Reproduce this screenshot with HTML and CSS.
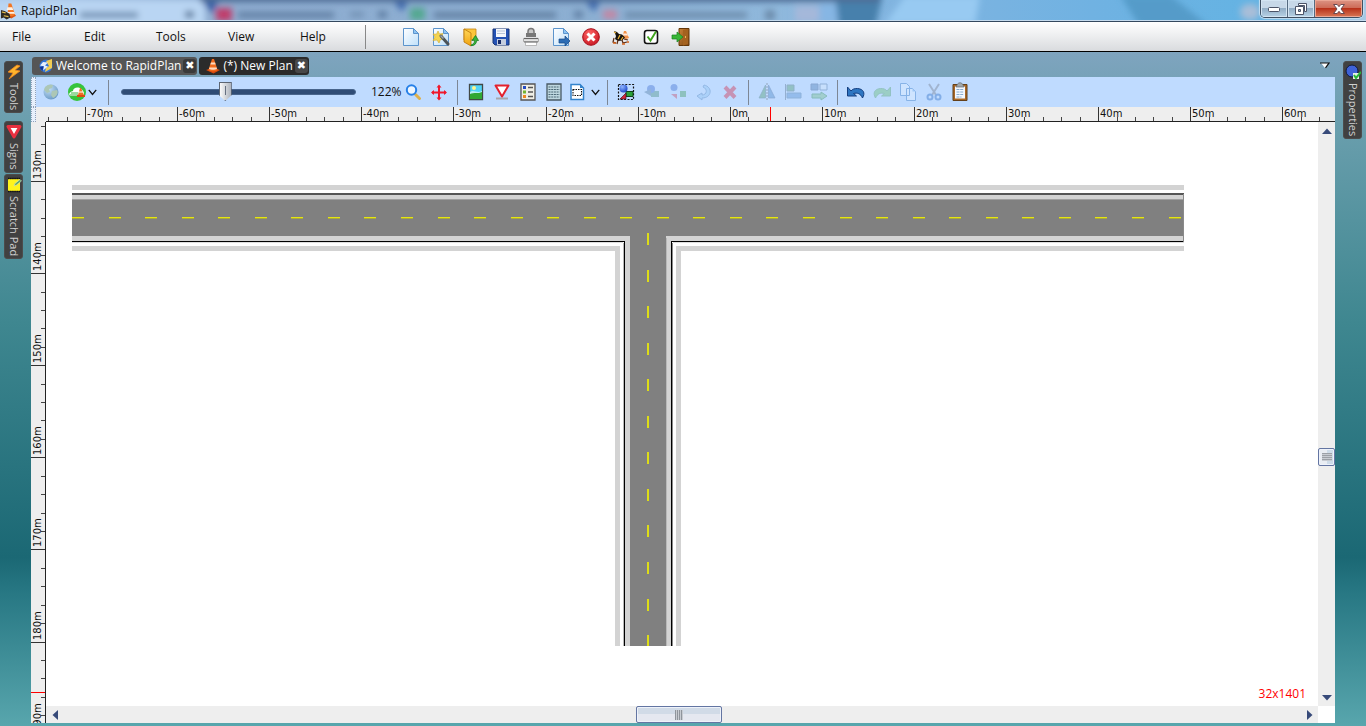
FILE: index.html
```html
<!DOCTYPE html>
<html lang="en">
<head>
<meta charset="utf-8">
<title>RapidPlan</title>
<link rel="stylesheet" href="styles.css">
</head>
<body>
<svg class="defs" aria-hidden="true">
  <defs>
    <linearGradient id="sheet" x1="0" y1="0" x2="1" y2="1"><stop offset="0" stop-color="#fff"/><stop offset="1" stop-color="#bfe0fa"/></linearGradient>
    <linearGradient id="gold" x1="0" y1="0" x2="0" y2="1"><stop offset="0" stop-color="#ffd75a"/><stop offset="1" stop-color="#f0a210"/></linearGradient>
    <linearGradient id="wood" x1="0" y1="0" x2="1" y2="1"><stop offset="0" stop-color="#c98438"/><stop offset="1" stop-color="#7c4310"/></linearGradient>
    <radialGradient id="red" cx=".4" cy=".3" r=".8"><stop offset="0" stop-color="#f66"/><stop offset="1" stop-color="#c4101c"/></radialGradient>
    <radialGradient id="ball" cx=".35" cy=".3" r=".8"><stop offset="0" stop-color="#8fb4ff"/><stop offset="1" stop-color="#123fc4"/></radialGradient>
    <radialGradient id="globe" cx=".35" cy=".3" r=".8"><stop offset="0" stop-color="#c4e0f4"/><stop offset="1" stop-color="#3f78a8"/></radialGradient>
    <filter id="soft" x="-20%" y="-80%" width="140%" height="260%"><feGaussianBlur stdDeviation="3"/></filter>
    <symbol id="cone" viewBox="0 0 16 16"><path d="M1 12l7-2.500 7 2.500-6.500 3.500z" fill="#d8480c"/><path d="M7 1h2l3.600 11c-2 1.900-7 1.900-9.200 0z" fill="#f26a1c"/><path d="M6 4.500h4l.7 2H5.300zM4.400 9.500h7.200l.4 1.200c-2 1.300-6 1.300-8 0z" fill="#ffd9bd"/></symbol>
    <symbol id="page" viewBox="0 0 20 20"><path d="M2.500 1.500h10l5 5v12h-15z" fill="url(#sheet)" stroke="#5c94cc"/><path d="M12.500 1.500v5h5z" fill="#8cc4f4" stroke="#5c94cc"/></symbol>
    <symbol id="caret" viewBox="0 0 8 6"><path d="M.7.700L4 4.700 7.300.7" fill="none" stroke="#111" stroke-width="1.200"/></symbol>
  </defs>
</svg>

<header class="titlebar">
  <svg class="glass" aria-hidden="true">
    <g filter="url(#soft)">
      <rect x="-10" y="0" width="215" height="26" fill="#b9d5f3"/>
      <path d="M196-6h26l-10 20z" fill="#3560a8"/><path d="M388-6h24l-10 18z" fill="#3c68ac"/><path d="M580-6h24l-10 18z" fill="#3c68ac"/>
      <rect x="80" y="12" width="58" height="6" fill="#7190b2"/><rect x="185" y="11" width="9" height="7" fill="#5d7c9f"/>
      <rect x="216" y="8" width="16" height="13" fill="#c03c6c"/>
      <rect x="238" y="12" width="96" height="6" fill="#6280a4"/><rect x="350" y="12" width="14" height="5" fill="#7190b2"/><rect x="378" y="11" width="9" height="7" fill="#6080a4"/>
      <rect x="410" y="8" width="15" height="12" fill="#52a890"/>
      <rect x="434" y="12" width="122" height="6" fill="#6280a2"/><rect x="574" y="11" width="9" height="7" fill="#6080a4"/>
      <rect x="603" y="10" width="14" height="9" fill="#c287a4"/><rect x="625" y="12" width="122" height="6" fill="#6d8cac"/>
      <rect x="765" y="10" width="10" height="10" fill="#6d8cac"/><rect x="795" y="6" width="24" height="16" fill="#a5b8da"/><rect x="820" y="4" width="22" height="18" fill="#86b6e4"/>
      <path d="M835-6h48l-8 34h-36z" fill="#4780ac"/><path d="M885 24l20-28h75l-5 28z" fill="#98caf2"/>
      <path d="M1120-5h50l40 32h-70z" fill="#559bc9"/>
      <ellipse cx="1250" cy="12" rx="10" ry="8" fill="#a9bed8"/>
      <rect x="200" y="-6" width="680" height="8" fill="#4d6c94"/>
    </g>
  </svg>
  <svg class="app-icon" viewBox="0 0 18 18" aria-hidden="true"><path d="M6 14l6-5 5 5-5 3z" fill="#dc5714"/><path d="M9 1h3l4 12c-2 2-6 2-8 0z" fill="#f27624"/><path d="M8 5h5l1 3H7zM7 10h8l1 2H7z" fill="#fff0e2"/><path d="M1 8l4 1 5 3 1 4-4 2-3-2-3 1z" fill="#302c24"/><path d="M2 10l4 1M4 14l5 1" stroke="#e4bc4c" stroke-width="1.200"/></svg>
  <h1 class="app-title">RapidPlan</h1>
  <div class="window-buttons">
    <button class="win" aria-label="Minimize"><svg width="14" height="8" viewBox="0 0 14 8"><rect x="1.500" y="2.500" width="11" height="4" rx="1" fill="#fff" stroke="#4c5468"/></svg></button>
    <button class="win" aria-label="Restore"><svg width="12" height="12" viewBox="0 0 12 12"><path d="M3.500.500h8v8h-2v-6h-6z" fill="#fff" stroke="#4c5468"/><path d="M.5 3.500h8v8h-8zM3.500 6.500v2h2v-2z" fill="#fff" fill-rule="evenodd" stroke="#4c5468"/></svg></button>
    <button class="win win-close" aria-label="Close"><svg width="12" height="10" viewBox="0 0 12 10"><path d="M.6.500h3.600L6 2.700 7.800.500h3.600L8 5l3.400 4.500H7.800L6 7.300 4.200 9.500H.6L4 5z" fill="#fff" stroke="#5c4048" stroke-width=".9"/></svg></button>
  </div>
</header>

<div class="menubar">
  <nav class="menus" aria-label="Main menu">
    <button class="menu">File</button><button class="menu">Edit</button><button class="menu">Tools</button><button class="menu">View</button><button class="menu">Help</button>
  </nav>
  <div class="main-tools">
    <button aria-label="New"><svg viewBox="0 0 20 20"><use href="#page"/></svg></button>
    <button aria-label="New from wizard"><svg viewBox="0 0 20 20"><use href="#page"/><path d="M7 4l1.500 3L12 6.500 10.500 9.500 13 12l-3.500.5L8 16l-2-3-4 .5L4 10 2 7l3.500.2z" fill="#f4d450" stroke="#d2aa2c" stroke-width=".6"/><path d="M10 9l7 8" stroke="#4c5358" stroke-width="3" stroke-linecap="round"/><path d="M9.500 8.500l3 3" stroke="#9ca4a8" stroke-width="1.500"/></svg></button>
    <button aria-label="Open"><svg viewBox="0 0 20 20"><path d="M3 2h12v11H3z" fill="#fcc63c" stroke="#c58410" stroke-width=".8"/><path d="M3 2l7 4v13l-7-4z" fill="url(#gold)" stroke="#b87408" stroke-width=".8"/><path d="M10 18c3-1 4-3 3-5l-2 .5 3.500-5 3 5-2 .2c0 3-2 5-5.500 5z" fill="#38b43c" stroke="#187c24" stroke-width=".8"/></svg></button>
    <button aria-label="Save"><svg viewBox="0 0 20 20"><path d="M2 2h16v16H4l-2-2z" fill="#2452b4" stroke="#163476"/><path d="M5 2h10v8H5z" fill="#f4f7fc"/><path d="M6 4h8M6 6.500h8" stroke="#b8c4d8"/><path d="M6 12h9v6H6z" fill="#c5cedf"/><path d="M7 13h3v4H7z" fill="#182c68"/></svg></button>
    <button aria-label="Print"><svg viewBox="0 0 20 20"><path d="M7 7V4.500c0-4 6-4 6 0V7" fill="#c8c8c8" stroke="#777" stroke-width="1.500"/><path d="M5 6h10v4H5z" fill="#777"/><path d="M2.500 11.500h15v3h-15z" fill="#e4e4e4" stroke="#999" stroke-width=".8"/><path d="M3 11.500h14" stroke="#666" stroke-width="1.200"/><path d="M4.500 15h11v3.500h-11z" fill="#fff" stroke="#aaa" stroke-width=".8"/><path d="M3 15h14" stroke="#777"/></svg></button>
    <button aria-label="Export"><svg viewBox="0 0 20 20"><use href="#page"/><path d="M8 12h6V9l5 5-5 5v-3H8z" fill="#2c6cb4" stroke="#174884" stroke-width=".7"/></svg></button>
    <button aria-label="Close plan"><svg viewBox="0 0 20 20"><circle cx="10" cy="10" r="8.300" fill="url(#red)" stroke="#a80c18"/><path d="M6.500 6.500l7 7m0-7l-7 7" stroke="#fff" stroke-width="3"/></svg></button>
    <button aria-label="Plan jobs"><svg viewBox="0 0 20 20"><path d="M11 11l2-7h2l3 7-3 1z" fill="#f29148"/><path d="M12.300 6.500h4l.6 2h-5z" fill="#ffe9da"/><path d="M3 4l3 1 2 2 3 .5 3 3-3 3-4 .5-3-2 1-3z" fill="#17130e"/><path d="M3 5l2 1M9 8l-2 4M12 10l-2 3" stroke="#efb434" stroke-width="1.200"/><path d="M3 11l-1 4 3 1M7 13l-1 4M11 13l1 3 4-1M13 12l4 1" fill="none" stroke="#5c2c14" stroke-width="1.200"/><path d="M2 16h3M11 17h3M16 15h2" stroke="#d8641c" stroke-width="1.400"/></svg></button>
    <button aria-label="Options"><svg viewBox="0 0 20 20"><rect x="3.500" y="3.500" width="13" height="13" rx="2.500" fill="#fff" stroke="#111" stroke-width="1.600"/><path d="M6.500 9.500l3 4 5.500-9" fill="none" stroke="#3fa41c" stroke-width="1.900"/></svg></button>
    <button aria-label="Exit"><svg viewBox="0 0 20 20"><path d="M8 1.500h10v17H8z" fill="url(#wood)" stroke="#653809"/><path d="M12 3l5-1v15l-5 1.500z" fill="#a4621f"/><path d="M14 10h1" stroke="#ffd56a" stroke-width="1.500"/><path d="M1 8h5V5l6 5-6 5v-3H1z" fill="#38b536" stroke="#17811f" stroke-width=".7"/></svg></button>
  </div>
</div>

<div class="workspace">
  <aside class="dock dock-left">
    <button class="dock-tab"><svg viewBox="0 0 16 16"><path d="M11 1L2 8l5 1-4 6 11-8-5-1 5-4z" fill="#ffb52c" stroke="#ef8420" stroke-width=".8"/></svg><span>Tools</span></button>
    <button class="dock-tab dock-signs"><svg viewBox="0 0 16 16"><path d="M2 2.500h12L8 13z" fill="#fff" stroke="#e83040" stroke-width="3" stroke-linejoin="round"/></svg><span>Signs</span></button>
    <button class="dock-tab dock-pad"><svg viewBox="0 0 16 16"><path d="M2 2h12v12H2z" fill="#fff41c"/><path d="M2 1.500h12M2 14.500h12" stroke="#111" stroke-width="1.500" stroke-dasharray="1.500 .6"/><path d="M8 9l1-2.500 5-4 1.500 1.500-5 4z" fill="#60ad65" stroke="#d7ddd7" stroke-width=".6"/></svg><span>Scratch Pad</span></button>
  </aside>

  <main class="documents">
    <div class="tabs">
      <div class="tab"><svg class="tab-icon" viewBox="0 0 16 16"><circle cx="8" cy="8" r="6.500" fill="#3474d4"/><path d="M8 3l6-2v9l-7 4 1-4 3-2z" fill="#f1cd54"/><path d="M5 4l5 .5-3 3 3 1-5 4 1-4-4-1z" fill="#e5eefb"/><path d="M1.500 9.500l4-1.500-1 5z" fill="#0c329c"/></svg><a href="#welcome">Welcome to RapidPlan</a><button aria-label="Close Welcome tab">✖</button></div>
      <div class="tab tab-active"><svg class="tab-icon" viewBox="0 0 16 16"><use href="#cone"/></svg><a href="#plan">(*) New Plan</a><button aria-label="Close New Plan tab">✖</button></div>
      <button class="tab-list" aria-label="Open documents"><svg width="10" height="7" viewBox="0 0 10 7"><path d="M1 1h8L5 6z" fill="#fff"/><path d="M0 1h9L5.500 5.800" fill="none" stroke="#111" stroke-width="1.200"/></svg></button>
    </div>

    <div class="toolbar">
      <i class="grip"></i>
      <button class="tool tool-globe" aria-label="Map" disabled><svg viewBox="0 0 20 20"><circle cx="10" cy="10" r="7.500" fill="url(#globe)"/><path d="M4 5c3-3 6-3 8-2l-1 3-3 1 1 3-3 1-3-3zM11 9l5-1c2 3-1 7-4 8l-2-3z" fill="#a4bf98"/></svg></button>
      <button class="tool tool-menu tool-online" aria-label="Online map"><svg viewBox="0 0 20 20"><circle cx="10" cy="10" r="9" fill="#37c43c"/><path d="M2 12c1-2 3-3 4-3 0-3 5-5 8-2 2 1 3 3 3 5v2H3z" fill="#fff"/><path d="M4 11h7M3 13h8" stroke="#37b43c"/><path d="M13 6h1l3 7h-6z" fill="#ee7024"/><path d="M10 13h8v2h-8z" fill="#dc4b10"/><path d="M12 10h4" stroke="#fff"/></svg><svg class="caret" viewBox="0 0 8 6"><use href="#caret"/></svg></button>
      <i class="sep"></i>
      <input class="zoom" type="range" min="0" max="100" value="44" aria-label="Zoom">
      <output class="zoom-value">122%</output>
      <button class="tool" aria-label="Zoom window"><svg viewBox="0 0 20 20"><path d="M12.500 12.500l4 4" stroke="#deb04c" stroke-width="3" stroke-linecap="round"/><circle cx="8.500" cy="8" r="4.700" fill="#eef6ff" stroke="#2680e8" stroke-width="2"/></svg></button>
      <button class="tool" aria-label="Pan"><svg viewBox="0 0 20 20"><path d="M10 4v13M3 10.500h14" stroke="#f0182c" stroke-width="2"/><path d="M7.500 5.500L10 2.500l2.500 3zM7.500 15.500h5L10 18.500zM5 8v5l-3-2.500zM15 8v5l3-2.500z" fill="#f0182c"/></svg></button>
      <i class="sep"></i>
      <button class="tool" aria-label="Background image"><svg viewBox="0 0 20 20"><path d="M3.500 2.500h13v15h-13z" fill="#52d4f8" stroke="#414846" stroke-width="1.300"/><path d="M4 10c4-3 7 2 12-1v3H4z" fill="#b8f0f7"/><path d="M4 12c4-2 8 0 12-2v7H4z" fill="#30a834"/><circle cx="8" cy="6" r="2" fill="#fff58c"/></svg></button>
      <button class="tool" aria-label="Signs"><svg viewBox="0 0 20 20"><path d="M4 15.500h12v2H4z" fill="#a7a7ac"/><path d="M3.500 3.500h13l-6.500 11z" fill="#fff" stroke="#e3222e" stroke-width="2" stroke-linejoin="round"/></svg></button>
      <button class="tool" aria-label="Legend"><svg viewBox="0 0 20 20"><path d="M3 2h14v16H3z" fill="#f0efe6" stroke="#555" stroke-width="1.300"/><path d="M5 4h3v3H5z" fill="#244cc4"/><path d="M5 8.500h3v3H5z" fill="#74b432"/><path d="M5 13h3v3H5z" fill="#ed8821"/><path d="M10 5.500h5M10 10h5M10 14.500h5" stroke="#555" stroke-width="1.500"/></svg></button>
      <button class="tool" aria-label="Manifest"><svg viewBox="0 0 20 20"><path d="M3 2h14v16H3z" fill="#bed7df" stroke="#485a65" stroke-width="1.300"/><path d="M4.500 5h11M4.500 7.500h11M4.500 10h11M4.500 12.500h11M4.500 15h11" stroke="#4c6977" stroke-width="1.200" stroke-dasharray="2 .7"/></svg></button>
      <button class="tool tool-menu tool-page" aria-label="Print region"><svg viewBox="0 0 20 20"><path d="M4 2.500h9l3.500 3.500v11.500H4z" fill="#fff" stroke="#3484cc" stroke-width="1.500"/><path d="M13 2v4h4z" fill="#3484cc"/><path d="M6 7.500h8.500v6H6z" fill="none" stroke="#111" stroke-width="1.100" stroke-dasharray="1.500 1"/></svg><svg class="caret" viewBox="0 0 8 6"><use href="#caret"/></svg></button>
      <i class="sep"></i>
      <button class="tool" aria-label="Select all"><svg viewBox="0 0 20 20"><path d="M2.500 2.500h15v15h-15z" fill="none" stroke="#111" stroke-width="1.200" stroke-dasharray="2 1.400"/><path d="M10 9.500h7v5h-7z" fill="#2ba238" stroke="#11441b"/><path d="M4 17l6-6v6z" fill="#d5263b" stroke="#431522" stroke-width=".7"/><circle cx="7.500" cy="6.500" r="4" fill="url(#ball)"/></svg></button>
      <button class="tool" aria-label="Group" disabled><svg viewBox="0 0 20 20"><path d="M9 9h8v6H9z" fill="#4b8f81"/><circle cx="9" cy="7" r="4" fill="#406fd0"/><path d="M2 10l7-3v7z" fill="#517ba1"/></svg></button>
      <button class="tool" aria-label="Ungroup" disabled><svg viewBox="0 0 20 20"><circle cx="6" cy="5.500" r="3.500" fill="#406fd0"/><path d="M12 9h6v6h-6z" fill="#479b61"/><path d="M3 12h6v5z" fill="#c54967"/></svg></button>
      <button class="tool" aria-label="Rotate" disabled><svg viewBox="0 0 20 20"><path d="M10 3c9 2 8 13-2 13v2l-5-4 5-3v2c5 0 6-6 1-8z" fill="#8fc4f1" stroke="#5284bc"/></svg></button>
      <button class="tool" aria-label="Delete" disabled><svg viewBox="0 0 20 20"><path d="M5 5l10 10.500m0-10.500l-10 10.500" stroke="#d22a47" stroke-width="4"/></svg></button>
      <i class="sep"></i>
      <button class="tool" aria-label="Mirror" disabled><svg viewBox="0 0 20 20"><path d="M8.500 3v13H2z" fill="#519b6e" stroke="#406f73" stroke-width=".7"/><path d="M11.500 3v13H18z" fill="#4b87c7" stroke="#385d91" stroke-width=".7"/><path d="M10 1v17" stroke="#555" stroke-dasharray="2 1"/></svg></button>
      <button class="tool" aria-label="Align" disabled><svg viewBox="0 0 20 20"><path d="M2.500 2v16" stroke="#56708c"/><path d="M4 3h7v6H4z" fill="#519b6e" stroke="#4c757b"/><path d="M4 11h14v5H4z" fill="#568fd1" stroke="#4979a5"/></svg></button>
      <button class="tool" aria-label="Distribute" disabled><svg viewBox="0 0 20 20"><path d="M2 2h7v6H2z" fill="#4c7cb4" stroke="#385d91"/><path d="M11 2h7v6h-7z" fill="#d4e5f8" stroke="#4e749f"/><path d="M3 12h9v-2l6 4-6 4v-2H3z" fill="#75bd87" stroke="#368c58"/></svg></button>
      <i class="sep"></i>
      <button class="tool" aria-label="Undo"><svg viewBox="0 0 20 20"><path d="M1.500 5v9h9l-3-2.500c4-1 7 0 9 4.500 3-5 1-9-5-9.500-3 0-5 .5-6.500 2.500z" fill="#2e76c2" stroke="#153f80"/></svg></button>
      <button class="tool" aria-label="Redo" disabled><svg viewBox="0 0 20 20"><path d="M18.500 5v9h-9l3-2.500c-4-1-7 0-9 4.500-3-5-1-9 5-9.500 3 0 5 .5 6.500 2.500z" fill="#68bd6f" stroke="#519d6b"/></svg></button>
      <button class="tool" aria-label="Copy" disabled><svg viewBox="0 0 20 20"><path d="M2.500 1.500h6l3 3v9h-9zM8.500 6.500h6l3 3v9h-9z" fill="#e5f3ff" stroke="#3579c5"/><path d="M14.500 6.500v3h3z" fill="#70abeb"/></svg></button>
      <button class="tool" aria-label="Cut" disabled><svg viewBox="0 0 20 20"><path d="M5 2l7 11M15 2L8 13" stroke="#747c8b" stroke-width="2"/><circle cx="6" cy="15" r="2.500" fill="none" stroke="#2a6cc5" stroke-width="2"/><circle cx="14" cy="15" r="2.500" fill="none" stroke="#2a6cc5" stroke-width="2"/></svg></button>
      <button class="tool" aria-label="Paste"><svg viewBox="0 0 20 20"><path d="M3 2.500h14v16H3z" fill="#a96828" stroke="#644019"/><path d="M5 4.500h10v12H5z" fill="#f3f8ff"/><path d="M6.500 7.500h7M6.500 10h7M6.500 12.500h7M6.500 15h5" stroke="#88acd0" stroke-dasharray="3 .7"/><path d="M7 3c1-3 5-3 6 0l1 2H6z" fill="#a0a8ad" stroke="#616970" stroke-width=".7"/></svg></button>
    </div>

    <div class="plan">
      <div class="corner"><i class="grip"></i></div>
      <svg class="ruler-x" id="ruler-x" aria-label="Horizontal ruler"></svg>
      <svg class="ruler-y" id="ruler-y" aria-label="Vertical ruler"></svg>
      <section class="canvas" id="plan">
        <svg class="drawing" role="img" aria-label="Road T-junction">
          <g transform="translate(-46 -122)" shape-rendering="crispEdges">
            <g fill="#d3d3d3">
              <path d="M72 185h1112v5H72zM72 246h548v400h-5V251H72zM1184 246H676v400h5V251h503z"/>
              <path d="M72 195h1112v46H672v405h-47V241H72z"/>
            </g>
            <path d="M72 193h1112v2H72z" fill="#555"/>
            <path d="M72 199h1112v1H72z" fill="#a0a0a0"/>
            <path d="M72 200h1112v36H666v410h-36V236H72z" fill="#808080"/>
            <path d="M72 241h553v405h-1V242H72zM1184 241H671v405h1V242h512z" fill="#000"/>
            <path d="M672 243h1v403h-1zM1183 194h1v48h-1z" fill="#8a8a8a"/>
            <path d="M623 243h1v403h-1zM666 238h1v408h-1z" fill="#b8b8b8"/>
            <path d="M72 242h551v1H72zM673 242h511v1H673z" fill="#dedede"/>
            <path d="M72 217.500H1181" stroke="#e5e510" stroke-dasharray="12 24.550"/>
            <path d="M72 218.500H1181" stroke="#aaaa38" stroke-dasharray="12 24.550"/>
            <path d="M648 233v413" stroke="#dddd16" stroke-width="2" stroke-dasharray="12 24.550"/>
          </g>
        </svg>
        <output class="coords">32x1401</output>
      </section>
      <div class="scroll scroll-y">
        <button class="arrow" aria-label="Scroll up"><svg width="12" height="7" viewBox="0 0 12 7"><path d="M6 .500L11 6H1z" fill="#374a79"/></svg></button>
        <span class="space-before"></span>
        <button class="scroll-thumb" aria-label="Vertical scroll position"></button>
        <span class="space-after"></span>
        <button class="arrow" aria-label="Scroll down"><svg width="12" height="7" viewBox="0 0 12 7"><path d="M6 6.500L1 1h10z" fill="#374a79"/></svg></button>
      </div>
      <div class="scroll scroll-x">
        <button class="arrow" aria-label="Scroll left"><svg width="7" height="12" viewBox="0 0 7 12"><path d="M.5 6L6 1v10z" fill="#374a79"/></svg></button>
        <span class="space-before"></span>
        <button class="scroll-thumb" aria-label="Horizontal scroll position"></button>
        <span class="space-after"></span>
        <button class="arrow" aria-label="Scroll right"><svg width="7" height="12" viewBox="0 0 7 12"><path d="M6.500 6L1 1v10z" fill="#374a79"/></svg></button>
      </div>
      <div class="scroll-corner"></div>
    </div>
  </main>

  <aside class="dock dock-right">
    <button class="dock-tab"><svg viewBox="0 0 16 16"><circle cx="7" cy="7" r="6" fill="#3f62d6" stroke="#101a3c"/><path d="M8 9h6v6H8z" fill="#e6f0e6"/><path d="M9 11l2 3 5-6" fill="none" stroke="#27b736" stroke-width="2"/></svg><span>Properties</span></button>
  </aside>
</div>
<script src="rulers.js"></script>
</body>
</html>
```

FILE: styles.css
```css
* { box-sizing: border-box; }

body {
  margin: 0;
  height: 100vh;
  display: flex;
  flex-direction: column;
  overflow: hidden;
  font: 12px/16px "Open Sans", "Noto Sans", sans-serif;
  color: #111;
}

button {
  border: 0;
  padding: 0;
  background: none;
  font: inherit;
  color: inherit;
}

svg { display: block; flex: none; }
.defs { position: absolute; width: 0; height: 0; }

/* Title bar */
.titlebar {
  position: relative;
  flex: none;
  height: 22px;
  display: flex;
  align-items: flex-start;
  gap: 4px;
  border-bottom: 1px solid #35495f;
  background: linear-gradient(90deg, #acc9ea, #8eacd0 16%, #8cafd2 45%, #8fb8dc 57%, #80b4e0 66%, #70b2e2 80%, #64b3e3 92%, #a6c8e4);
  box-shadow: inset 0 -1px #c5dbee;
}
.glass { position: absolute; width: 100%; height: 20px; }
.app-icon { position: relative; width: 17px; height: 18px; margin-top: 2px; }
.app-title { position: relative; flex: 1; margin: 2px 0 0; font-size: 12px; font-weight: 400; line-height: 17px; }

.window-buttons {
  position: relative;
  display: flex;
  height: 18px;
  margin-right: 3px;
  border: 1px solid #3f4f62;
  border-top: 0;
  border-radius: 0 0 5px 5px;
  overflow: hidden;
  box-shadow: 0 0 1px 1px #c5dff2;
}
.win {
  width: 27px;
  display: grid;
  place-items: center;
  border-right: 1px solid #556a80;
  background: linear-gradient(#c7d8e8 45%, #92adc5 50%, #b7d2e6);
  box-shadow: inset 0 0 0 1px #d3e4f2;
}
.win-close {
  width: 47px;
  border: 0;
  background: linear-gradient(#dc9484, #ce6c58 45%, #b8321a 50%, #d87856);
  box-shadow: inset 0 0 0 1px #eba795;
}

/* Menu bar */
.menubar {
  flex: none;
  height: 30px;
  display: flex;
  align-items: center;
  border-bottom: 1px solid #000;
  background: linear-gradient(#fff, #f0f1f2 40%, #d9dbde);
}
.menus { display: flex; width: 366px; height: 24px; border-right: 1px solid #888; }
.menu { width: 72px; padding-left: 12px; text-align: left; }
.main-tools { display: flex; margin-left: 30px; }
.main-tools button { width: 30px; display: grid; place-items: center; }
.main-tools svg { width: 20px; height: 20px; }

/* Workspace and side docks */
.workspace {
  flex: 1;
  min-height: 0;
  display: grid;
  grid-template-columns: 31px minmax(0, 1fr) 31px;
  padding-bottom: 3px;
  background: linear-gradient(#7fa4bf, #6b9fae 10%, #3f8790 40%, #1b6874 75%, #277783 80%, #58a6ad);
}
.dock { padding-top: 9px; }
.dock-left { padding-left: 4px; }
.dock-right { padding-left: 8px; }
.dock-tab {
  width: 19px;
  min-height: 52px;
  display: flex;
  flex-direction: column;
  align-items: center;
  gap: 3px;
  padding: 2px 0;
  border: 1px solid #4c4c4c;
  border-radius: 3px;
  background: #414141;
  color: #d0d0d0;
  font-size: 11px;
}
.dock-tab svg { width: 16px; height: 16px; }
.dock-tab span { writing-mode: vertical-rl; line-height: 16px; }
.dock-signs { margin-top: 8px; }
.dock-pad { margin-top: 1px; }

/* Document tabs */
.documents { display: flex; flex-direction: column; min-width: 0; min-height: 0; }
.tabs { flex: none; height: 25px; display: flex; align-items: center; gap: 2px; padding: 4px 5px 2px 1px; }
.tab {
  display: flex;
  align-items: center;
  height: 18px;
  gap: 2px;
  padding: 0 1px 0 6px;
  border-radius: 3px;
  background: #555;
}
.tab-active { background: #2b2b2b; }
.tab a { color: #fff; text-decoration: none; }
.tab-icon { width: 16px; height: 16px; }
.tab button {
  width: 13px;
  height: 14px;
  border-radius: 3px;
  background: #3a3a3a;
  color: #fff;
  font: 11px/14px "DejaVu Sans", sans-serif;
}
.tab-active button { background: #484848; }
.tab-list { margin-left: auto; }

/* Toolbar */
.toolbar { flex: none; height: 30px; display: flex; align-items: center; background: #bfdbff; }
.grip { flex: none; width: 5px; height: 100%; margin-right: 2px; border: 1px dotted #8fa0b8; background: #e7f0fc; }
.tool { flex: none; width: 26px; height: 26px; display: flex; align-items: center; justify-content: center; }
.tool svg { width: 20px; height: 20px; }
.tool:disabled { opacity: 0.4; }
.tool-globe:disabled { opacity: 0.7; }
.tool-menu { justify-content: flex-start; }
.tool-online { width: 39px; padding-left: 3px; gap: 1px; }
.tool-page { width: 35px; gap: 4px; }
.tool-menu .caret { width: 9px; height: 7px; }
.sep { flex: none; width: 1px; height: 25px; margin: 0 5px; background: #7d8795; }

.zoom { appearance: none; width: 235px; height: 20px; margin: 0 0 0 7px; background: none; }
.zoom::-webkit-slider-runnable-track { height: 6px; border: 1px solid #48658c; border-radius: 3px; background: #2f4c75; }
.zoom::-webkit-slider-thumb {
  appearance: none;
  width: 13px;
  height: 19px;
  margin-top: -8px;
  background: linear-gradient(90deg, transparent 46%, #667080 46% 54%, transparent 54%) center 3px / 100% 9px no-repeat, linear-gradient(90deg, #fafafa, #aeb4bd);
  border: 1px solid #5c6572;
  clip-path: polygon(0 0, 100% 0, 100% 68%, 50% 100%, 0 68%);
}
.zoom-value { width: 44px; padding-left: 15px; white-space: nowrap; }

/* Plan area */
.plan {
  flex: 1;
  min-height: 0;
  display: grid;
  grid-template: 15px minmax(0, 1fr) 17px / 15px minmax(0, 1fr) 17px;
  background: #fff;
}
.corner { display: flex; background: #eee; }
.ruler-x { grid-column: 2 / 4; width: 100%; height: 15px; background: #eee; border-bottom: 1px solid #222; }
.ruler-y { grid-row: 2 / 4; grid-column: 1; width: 15px; height: 100%; background: #eee; border-right: 1px solid #222; }
.ruler-x text, .ruler-y text { font: 10px "DejaVu Sans", sans-serif; fill: #111; }
.major { fill: #333; }
.minor { fill: #444; }
.marker { fill: #f00; }

.canvas { position: relative; grid-area: 2 / 2; background: #fff; overflow: hidden; }
.drawing { width: 100%; height: 100%; }
.coords { position: absolute; right: 12px; bottom: 4px; color: #f00; }

.scroll { display: flex; background: #eee; }
.scroll-y { grid-area: 2 / 3; flex-direction: column; }
.scroll-x { grid-area: 3 / 2; }
.scroll-corner { grid-area: 3 / 3; background: #fff; }
.arrow { flex: none; width: 18px; height: 18px; display: grid; place-items: center; }
.scroll-x .arrow { height: 17px; }
.scroll-y .arrow { width: 17px; }
.scroll-y .space-before { flex: 308; }
.scroll-y .space-after { flex: 222; }
.scroll-x .space-before { flex: 572; }
.scroll-x .space-after { flex: 578; }
.scroll-thumb {
  flex: none;
  border: 1px solid #6375a2;
  border-radius: 2px;
  box-shadow: inset 0 0 0 1px #eef2fa;
}
.scroll-x .scroll-thumb {
  width: 86px;
  height: 17px;
  background: repeating-linear-gradient(90deg, #8f959c 0 1px, #c8ccd2 1px 2px) center / 8px 10px no-repeat, linear-gradient(#d1dbe7 50%, #e5e8f0 50%);
}
.scroll-y .scroll-thumb {
  width: 17px;
  height: 18px;
  background: repeating-linear-gradient(#9ba0a6 0 1px, #c8ccd2 1px 2px) center / 10px 8px no-repeat, linear-gradient(90deg, #e9edf3 50%, #cedce9 50%);
}
```

FILE: rulers.js
```js
const NS = "http://www.w3.org/2000/svg";
const STEP = 92.1;

function add(parent, name, attributes, text) {
  const node = document.createElementNS(NS, name);
  for (const key in attributes) node.setAttribute(key, attributes[key]);
  if (text) node.textContent = text;
  parent.append(node);
}

function drawRulers() {
  const x = document.getElementById("ruler-x");
  const y = document.getElementById("ruler-y");
  x.replaceChildren();
  y.replaceChildren();

  for (let i = -2; 39 + i * STEP / 5 < x.clientWidth; i++) {
    const left = Math.round(39 + i * STEP / 5);
    const major = i % 5 === 0;
    add(x, "rect", { class: major ? "major" : "minor", x: left, y: major ? 0 : 10, width: 1, height: major ? 14 : 4 });
    if (major) add(x, "text", { x: left + 2, y: 10 }, (i * 2 - 70) + "m");
  }
  add(x, "rect", { class: "marker", x: 724, y: 0, width: 1, height: 14 });

  for (let i = -3; 59 + i * STEP / 5 < y.clientHeight + 60; i++) {
    const top = Math.round(59 + i * STEP / 5);
    const major = i % 5 === 0;
    add(y, "rect", { class: major ? "major" : "minor", x: major ? 0 : 10, y: top, width: major ? 14 : 4, height: 1 });
    if (major) add(y, "text", { transform: `translate(10 ${top - 2}) rotate(-90)` }, (i * 2 + 130) + "m");
  }
  add(y, "rect", { class: "marker", x: 0, y: 570, width: 14, height: 1 });
}

drawRulers();
addEventListener("resize", drawRulers);
```
